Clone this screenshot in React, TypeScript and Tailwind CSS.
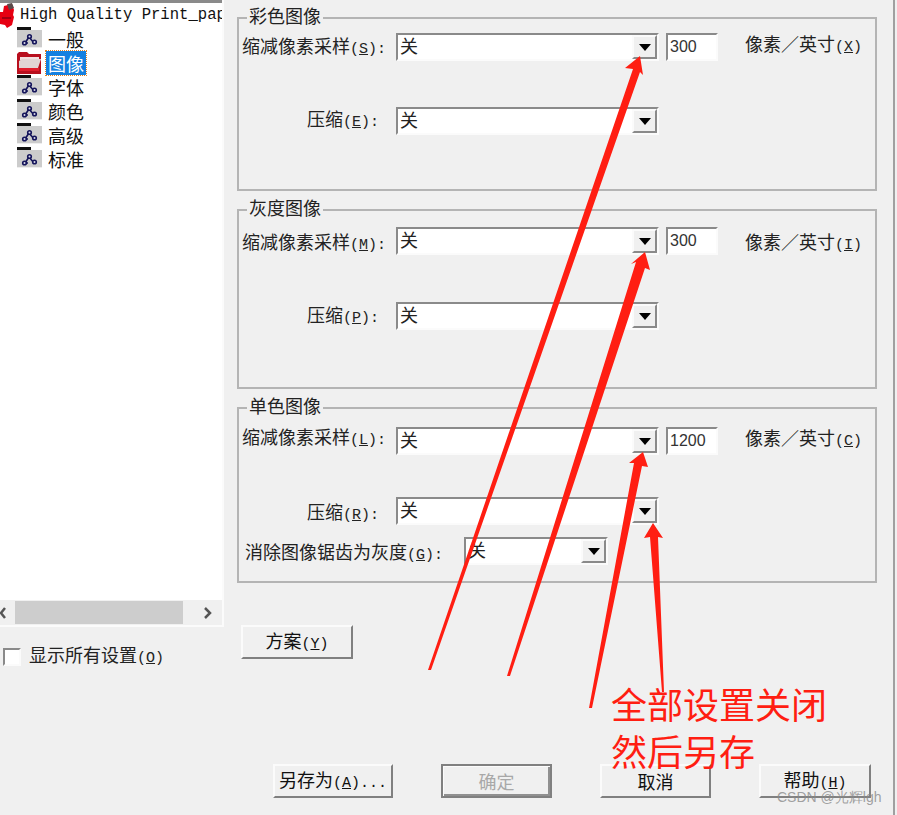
import type { ReactNode } from "react";

const mono = "font-['Liberation_Mono','Noto_Sans_CJK_SC',monospace]";

function Caret() {
  return (
    <svg width="12" height="7" viewBox="0 0 12 7" aria-hidden="true">
      <path d="M0 0H12L6 7Z" fill="#000" />
    </svg>
  );
}

function Label({ text, hot, tail = ":" }: { text: string; hot: string; tail?: string }) {
  return (
    <span className="whitespace-nowrap text-[18px] leading-[22px] text-[#222]">
      {text}
      <span className={`${mono} text-[15px]`}>
        (<span className="underline">{hot}</span>){tail}
      </span>
    </span>
  );
}

function Combo({ width = "w-[263px]" }: { width?: string }) {
  return (
    <div className={`flex h-[28px] ${width} shrink-0 border-2 border-b-[#fbfbfb] border-l-[#8a8a8a] border-r-[#fbfbfb] border-t-[#8a8a8a] bg-white`}>
      <span className="flex-1 pl-[2px] text-[18px] leading-[21px] text-[#222]">关</span>
      <span className="flex w-[25px] items-center justify-center border-2 border-b-[#8a8a8a] border-l-[#fbfbfb] border-r-[#8a8a8a] border-t-[#fbfbfb] bg-[#f0f0f0]">
        <Caret />
      </span>
    </div>
  );
}

function NumberBox({ value }: { value: string }) {
  return (
    <div className="ml-[7px] h-[28px] w-[52px] shrink-0 border-2 border-b-[#fbfbfb] border-l-[#8a8a8a] border-r-[#fbfbfb] border-t-[#8a8a8a] bg-white pl-[2px] font-['Liberation_Sans',sans-serif] text-[16px] leading-[24px] text-[#333]">
      {value}
    </div>
  );
}

function Group({ title, hot1, hot2, unit, value, height, top, gap, pad1, pad2, padUnit, children }: {
  title: string;
  hot1: string;
  hot2: string;
  unit: string;
  value: string;
  height: string;
  top: string;
  gap: string;
  pad1: string;
  pad2: string;
  padUnit: string;
  children?: ReactNode;
}) {
  return (
    <section className={`relative ${height} ${top} w-[640px] border-2 border-[#b4b4b4] pl-[3px]`}>
      <h3 className="absolute left-[8px] top-[-14px] bg-[#f0f0f0] px-[2px] text-[18px] font-normal leading-[20px] text-[#222]">{title}</h3>
      <div className="flex h-[28px] items-start">
        <div className={`flex w-[154px] ${pad1}`}><Label text="缩减像素采样" hot={hot1} /></div>
        <Combo />
        <NumberBox value={value} />
        <div className={`ml-[27px] ${padUnit}`}><Label text="像素／英寸" hot={unit} tail="" /></div>
      </div>
      <div className={`${gap} flex h-[28px] items-start`}>
        <div className={`flex w-[154px] pl-[65px] ${pad2}`}><Label text="压缩" hot={hot2} /></div>
        <Combo />
      </div>
      {children}
    </section>
  );
}

function NodeIcon() {
  return (
    <svg width="25" height="24" viewBox="0 0 25 24" className="shrink-0" aria-hidden="true">
      <rect x="0" y="0" width="14" height="3" fill="#111" />
      <rect x="0" y="3" width="25" height="18" fill="#cccccc" />
      <rect x="0" y="20" width="25" height="1" fill="#eeeeee" />
      <g fill="#d8d8e8" stroke="#14145a" strokeWidth="1.6">
        <path d="M8 16l4-6M12 10l5 6M8 16h3" fill="none" />
        <circle cx="7.5" cy="16" r="1.8" />
        <circle cx="12.5" cy="9.5" r="1.8" />
        <circle cx="17.5" cy="15" r="1.8" />
      </g>
    </svg>
  );
}

function FolderIcon() {
  return (
    <svg width="25" height="24" viewBox="0 0 25 24" className="shrink-0" aria-hidden="true">
      <path d="M0 3l2-2h8l2 2h12v20H0Z" fill="#b80f1e" />
      <path d="M3 6h19v3H3Z" fill="#f4dede" />
      <path d="M2 10l3-2h19l-3 9H2Z" fill="#e2d4d4" />
      <path d="M2 17h20v3H2Z" fill="#e01c2c" />
    </svg>
  );
}

function RootIcon() {
  return (
    <svg width="14" height="25" viewBox="0 0 14 25" className="shrink-0" aria-hidden="true">
      <path d="M0 9h3l1-6 8-2 2 6-1 5 1 2-2 8-5 3-2-3-5-1Z" fill="#e60012" />
      <path d="M7 1l5-1 2 5-5 2Z" fill="#5a4a4a" />
      <path d="M2 14h9v2H2Z" fill="#a00012" />
    </svg>
  );
}

const items = ["一般", "图像", "字体", "颜色", "高级", "标准"];

function Tree() {
  return (
    <div className="h-[600px] overflow-hidden border-t-[3px] border-[#8a8a8a] bg-white">
      <div className="flex h-[24px] items-start gap-[6px]">
        <RootIcon />
        <span className={`${mono} whitespace-nowrap pt-[5px] text-[15.6px] leading-none text-[#111]`}>High Quality Print_pape</span>
      </div>
      {items.map((item) => (
        <div key={item} className="flex h-[24px] items-center pl-[17px]">
          {item === "图像" ? <FolderIcon /> : <NodeIcon />}
          <span className={`ml-[4px] px-[2px] text-[18px] leading-[24px] ${item === "图像" ? "bg-[#1480e0] text-white outline-1 outline-dotted outline-[#e08020]" : "text-[#111]"}`}>{item}</span>
        </div>
      ))}
    </div>
  );
}

function ScrollBar() {
  return (
    <div className="flex h-[25px] items-center bg-[#f0f0f0]">
      <svg width="15" height="12" viewBox="0 0 15 12" className="shrink-0" aria-hidden="true">
        <path d="M5 1L1 6l4 5" fill="none" stroke="#555" strokeWidth="2.5" />
      </svg>
      <div className="h-[23px] w-[168px] shrink-0 bg-[#cdcdcd]" />
      <svg width="39" height="12" viewBox="0 0 39 12" className="shrink-0" aria-hidden="true">
        <path d="M22 1l5 5-5 5" fill="none" stroke="#555" strokeWidth="2.5" />
      </svg>
    </div>
  );
}

function Button({ children, width = "w-[111px]", strong }: { children: ReactNode; width?: string; strong?: boolean }) {
  return (
    <button
      type="button"
      className={`flex h-[34px] ${width} items-center justify-center border-2 bg-[#f0f0f0] text-[18px] text-[#111] ${strong ? "border-[#808080] shadow-[inset_1px_1px_0_#fbfbfb,inset_-2px_-2px_0_#909090]" : "border-b-[#808080] border-l-[#fbfbfb] border-r-[#808080] border-t-[#fbfbfb]"}`}
    >
      {children}
    </button>
  );
}

function ButtonText({ text, hot, tail = "" }: { text: string; hot: string; tail?: string }) {
  return (
    <span className="whitespace-nowrap">
      {text}
      <span className={`${mono} text-[15px]`}>
        (<span className="underline">{hot}</span>){tail}
      </span>
    </span>
  );
}

function Arrows() {
  return (
    <svg width="897" height="815" viewBox="0 0 897 815" className="pointer-events-none absolute left-0 top-0" aria-hidden="true">
      <g fill="#ff1e12">
        <path d="M428 670L431 670L640 72L643 75L640 56L625 68L633 69Z" />
        <path d="M507 676L510 676L645 268L650 270L645 252L631 264L636 262Z" />
        <path d="M589 708L592 708L642 466L648 467L643 452L629 463L634 463Z" />
        <path d="M662 692L664 692L658 537L663 538L653 523L644 538L650 537Z" />
      </g>
    </svg>
  );
}

export default function App() {
  return (
    <div className="relative flex h-[815px] w-[897px] overflow-hidden bg-[#f0f0f0] font-['Noto_Sans_CJK_SC','Noto_Sans',sans-serif]">
      <aside className="flex h-full w-[224px] shrink-0 flex-col">
        <div className="w-[224px] border-b-2 border-r-2 border-[#fbfbfb]">
          <Tree />
          <ScrollBar />
        </div>
        <label className="ml-[3px] mt-[16px] flex items-center gap-[8px]">
          <span className="h-[18px] w-[18px] border-2 border-b-[#fbfbfb] border-l-[#8a8a8a] border-r-[#fbfbfb] border-t-[#8a8a8a] bg-white" />
          <Label text="显示所有设置" hot="O" tail="" />
        </label>
      </aside>
      <main className="flex h-full w-[671px] flex-col border-r-2 border-[#a0a0a0] pl-[13px]">
        <div className="mt-[17px] flex flex-col gap-[18px]">
          <Group title="彩色图像" hot1="S" hot2="E" unit="X" value="300" height="h-[174px]" top="pt-[14px]" gap="mt-[46px]" pad1="pt-[1px]" pad2="pt-0" padUnit="-mt-[1px]" />
          <Group title="灰度图像" hot1="M" hot2="P" unit="I" value="300" height="h-[180px]" top="pt-[16px]" gap="mt-[47px]" pad1="pt-[3px]" pad2="pt-[1px]" padUnit="pt-[3px]" />
          <Group title="单色图像" hot1="L" hot2="R" unit="C" value="1200" height="h-[176px]" top="pt-[18px]" gap="mt-[42px]" pad1="-mt-[2px]" pad2="pt-[3px]" padUnit="-mt-[1px]">
            <div className="mt-[12px] flex h-[28px] items-start">
              <div className="w-[222px] pl-[3px] pt-[3px]"><Label text="消除图像锯齿为灰度" hot="G" /></div>
              <Combo width="w-[144px]" />
            </div>
          </Group>
        </div>
        <div className="ml-[4px] mt-[42px]">
          <Button width="w-[112px]"><ButtonText text="方案" hot="Y" /></Button>
        </div>
        <div className="ml-[36px] mt-[105px] flex gap-[48px]">
          <Button width="w-[120px]"><ButtonText text="另存为" hot="A" tail="..." /></Button>
          <Button strong><span className="text-[#a8a8a8]">确定</span></Button>
          <Button><span>取消</span></Button>
          <Button width="w-[112px]"><ButtonText text="帮助" hot="H" /></Button>
        </div>
      </main>
      <Arrows />
      <div className="absolute left-[611px] top-[680px] text-[36px] leading-[47px] text-[#ff1e12]">
        <p>全部设置关闭</p>
        <p>然后另存</p>
      </div>
      <span className="absolute left-[777px] top-[788px] font-['Liberation_Sans',sans-serif] text-[14px] leading-[18px] text-[#8a8a8a]/80">CSDN @光辉lgh</span>
    </div>
  );
}
